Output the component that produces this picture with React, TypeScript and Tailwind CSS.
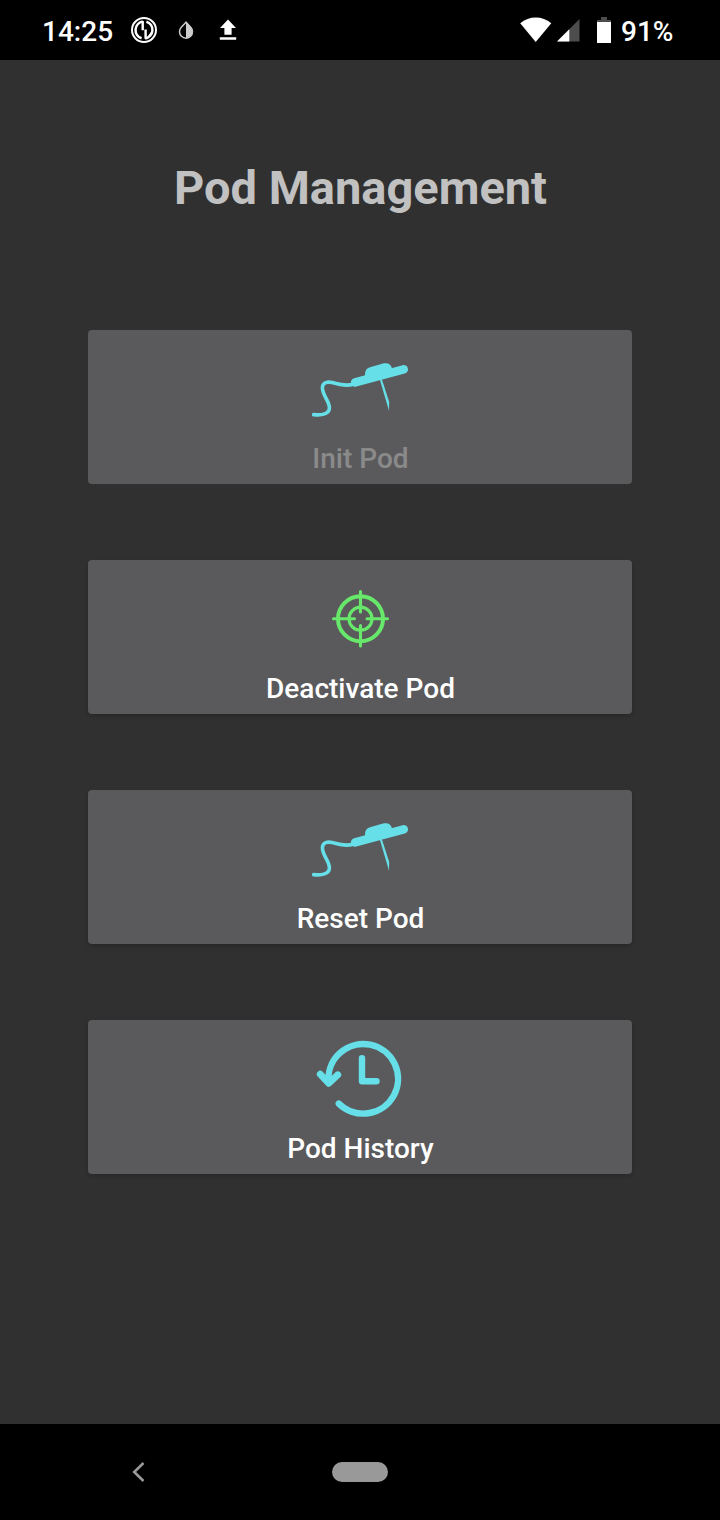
import React from "react";

function PodIcon() {
  return (
    <svg className="size-24" viewBox="0 0 96 96" fill="none" stroke="#67dfe8" strokeLinecap="round">
      <path d="M1.7 73.6C10 74.6 17.2 73 17.4 67C17.5 60 10.3 54.5 10.4 46.5C10.6 41 16 40.6 20 41.5C27 43.2 33 45.6 42 43" strokeWidth="3.6" />
      <path d="M43.2 41.4L91.7 28.3" strokeWidth="8.6" />
      <path d="M53 38V33.5C53 29.5 54.5 27.2 58 26.2L71 22.6C75.5 21.4 79 23 80 27.5V32Z" fill="#67dfe8" stroke="none" />
      <path d="M67.8 38.5L69.8 38L77.2 61L77 69.7Z" fill="#67dfe8" stroke="none" />
    </svg>
  );
}

function TargetIcon() {
  return (
    <svg className="size-24" viewBox="0 0 96 96" fill="none" stroke="#67e86a" strokeLinecap="round">
      <circle cx="48.5" cy="47.7" r="22.5" strokeWidth="4" />
      <circle cx="48.5" cy="47.7" r="11.5" strokeWidth="3.2" />
      <path d="M48.5 20.5V41M48.5 54.5V75M21.5 47.7H42.5M55 47.7H75.5" strokeWidth="3.1" />
    </svg>
  );
}

function HistoryIcon() {
  return (
    <svg className="size-24" viewBox="0 0 96 96" fill="none" stroke="#67dfe8" strokeWidth="6.4" strokeLinecap="round" strokeLinejoin="round">
      <path d="M16.6 51A34.8 34.8 0 1 1 26.8 72.6" />
      <path d="M8.2 43.2L16.8 52.3L25.8 43.8" strokeWidth="6.8" />
      <path d="M50 27.2V50.3H64.5" />
    </svg>
  );
}

const actions = [
  { label: "Init Pod", Icon: PodIcon, disabled: true },
  { label: "Deactivate Pod", Icon: TargetIcon, disabled: false },
  { label: "Reset Pod", Icon: PodIcon, disabled: false },
  { label: "Pod History", Icon: HistoryIcon, disabled: false },
];

function StatusBar() {
  return (
    <header className="flex h-[60px] items-center bg-black pl-[42px] pr-[46px] text-[28px] font-medium leading-[60px] text-white">
      <span className="w-[88px] pt-[3px]">14:25</span>
      <svg className="h-7 w-7" viewBox="0 0 28 28" fill="none" stroke="#fff">
        <circle cx="14" cy="14" r="12" strokeWidth="2" />
        <path d="M12.8 5.6A8.6 8.6 0 0 0 11.6 22.3M15.2 22.4A8.6 8.6 0 0 0 16.4 5.7" strokeWidth="2.5" />
        <path d="M12.7 5V14.2M15.6 13.5V22.8" strokeWidth="2.4" />
        <path d="M22.5 15.5L18 21.5" strokeWidth="2" />
      </svg>
      <svg className="ml-5 h-[18px] w-4" viewBox="0 0 16 18">
        <path d="M8 1.2L3.3 6.2A6.5 6.5 0 1 0 12.7 6.2Z" fill="none" stroke="#ccc" strokeWidth="1.5" />
        <path d="M8 1L13 6.1A6.9 6.9 0 0 1 8 17.5Z" fill="#ccc" />
      </svg>
      <svg className="ml-[25px] h-[22px] w-[18px]" viewBox="0 0 18 22" fill="#fff">
        <path d="M9 .4L17 9H12.6V15.7H5.4V9H1ZM.8 18.2H17.2V20.8H.8Z" />
      </svg>
      <svg className="ml-auto h-[26px] w-8" viewBox="0 0 32 26" fill="#fff">
        <path d="M.2 6.2C9-1.4 22.5-1.4 31.3 6.2L15.7 25Z" />
      </svg>
      <svg className="ml-[5px] h-6 w-[23px]" viewBox="0 0 23 24">
        <path d="M22.5 1V23.5H0Z" fill="#4d4d4d" />
        <path d="M12.3 11.2V23.5H0Z" fill="#fff" />
      </svg>
      <svg className="ml-[17px] h-[26px] w-[14px]" viewBox="0 0 14 26">
        <path d="M4 0H10V3H14V6H0V3H4Z" fill="#4d4d4d" />
        <path d="M0 5H14V26H0Z" fill="#fff" />
      </svg>
      <span className="ml-[10px] w-[53px] pt-[3px]">91%</span>
    </header>
  );
}

export default function App() {
  return (
    <div className="flex h-[1520px] w-[720px] flex-col bg-[#303030] font-['Roboto',sans-serif]">
      <StatusBar />
      <main className="flex flex-1 flex-col items-center">
        <h1 className="mt-[100px] pl-px text-[47px] font-bold leading-[56px] text-[#c1c1c1]">Pod Management</h1>
        <div className="mt-[114px] flex flex-col gap-[76px]">
          {actions.map(({ label, Icon, disabled }) => (
            <button
              key={label}
              disabled={disabled}
              className={
                disabled
                  ? "flex h-[154px] w-[544px] flex-col items-center rounded-[4px] bg-[#5a5a5c] pt-[11px] text-[#8a8a8b]"
                  : "flex h-[154px] w-[544px] flex-col items-center rounded-[4px] bg-[#5a5a5c] pt-[11px] text-white shadow-[0_2px_4px_rgba(0,0,0,0.18)]"
              }
            >
              <Icon />
              <span className="mt-[5px] pl-px text-[28px] font-medium leading-[33px]">{label}</span>
            </button>
          ))}
        </div>
      </main>
      <nav className="grid h-24 grid-cols-[332px_56px_332px] items-center bg-black">
        <svg className="ml-[131px] h-5 w-[14px]" viewBox="0 0 14 20" fill="none" stroke="#999" strokeWidth="2.6">
          <path d="M12.5 1L3.2 10L12.5 19" />
        </svg>
        <div className="h-5 rounded-full bg-[#999]" />
      </nav>
    </div>
  );
}
